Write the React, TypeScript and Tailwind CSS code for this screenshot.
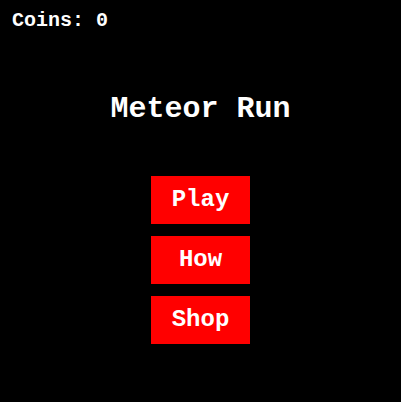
export default function App() {
  const menu = ['Play', 'How', 'Shop']

  return (
    <div className="w-full h-[402px] bg-black text-white font-['Liberation_Mono','Courier_New',monospace] flex flex-col">
      {/* coin counter */}
      <div className="px-[12px] pt-[9px] text-[20px] leading-[24px] font-bold">Coins: 0</div>

      <h1 className="mt-[58px] text-center text-[30px] leading-[36px] font-bold">Meteor Run</h1>

      <div className="mt-[49px] flex flex-col items-center gap-[12px]">
        {menu.map((label) => (
          <button
            key={label}
            className="w-[99px] h-[48px] bg-[#ff0000] text-white text-[24px] font-bold flex items-center justify-center"
          >
            {label}
          </button>
        ))}
      </div>
    </div>
  )
}
